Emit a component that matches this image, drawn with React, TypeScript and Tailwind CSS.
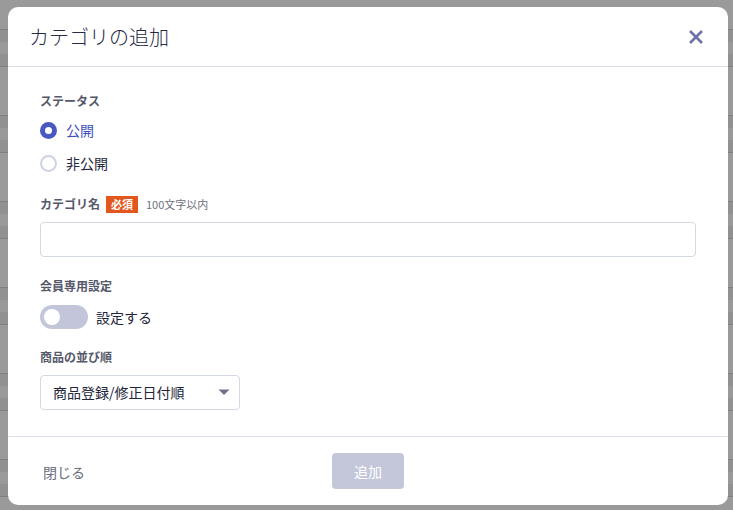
import React, { useState } from 'react';

const font = { fontFamily: '"Noto Sans CJK JP", "Noto Sans", sans-serif' };

// dimmed page behind the modal: table rows with stripes
const Backdrop: React.FC = () => {
  const rows = Array.from({ length: 7 });
  return (
    <div className="absolute inset-0 bg-[#9a9a9a] overflow-hidden">
      <div className="h-[29px]" />
      {rows.map((_, i) => (
        <div key={i} className="h-[86px] flex flex-col">
          <div className="h-px bg-[#818181]" />
          <div className="h-[12px] bg-[#919191]" />
          <div className="h-[12px]" />
          <div className="h-[12px] bg-[#919191]" />
          <div className="h-px bg-[#818181]" />
        </div>
      ))}
    </div>
  );
};

const FieldLabel: React.FC<{ children: React.ReactNode }> = ({ children }) => (
  <div className="h-5 flex items-center text-[12px] font-bold text-[#55586a]">{children}</div>
);

const Radio: React.FC<{ checked: boolean; label: string; onClick: () => void }> = ({ checked, label, onClick }) => (
  <button onClick={onClick} className="h-[33px] flex items-center gap-[9px] text-left">
    {checked ? (
      <span className="w-[17px] h-[17px] rounded-full bg-[#4a58c4] flex items-center justify-center">
        <span className="w-[7px] h-[7px] rounded-full bg-white" />
      </span>
    ) : (
      <span className="w-[17px] h-[17px] rounded-full border-2 border-[#cdd3e3] bg-white" />
    )}
    <span className={`text-[14px] ${checked ? 'text-[#3f4fbf]' : 'text-[#23253a]'}`}>{label}</span>
  </button>
);

export default function App() {
  const [status, setStatus] = useState<'public' | 'private'>('public');
  const [memberOnly, setMemberOnly] = useState(false);
  const [name, setName] = useState('');

  return (
    <div className="relative w-[733px] h-[510px] overflow-hidden" style={font}>
      <Backdrop />
      <div className="absolute left-[8px] top-[7px] w-[720px] h-[498px] bg-white rounded-[10px] flex flex-col">
        <div className="h-[60px] shrink-0 flex items-center justify-between pl-[21px] pr-[24px] border-b border-[#d9dce9]">
          <h1 className="text-[20px] font-light text-[#262a45]">カテゴリの追加</h1>
          <button aria-label="閉じる" className="text-[#6d73a6]">
            <svg width="16" height="16" viewBox="0 0 16 16">
              <path d="M2 2 L14 14 M14 2 L2 14" stroke="currentColor" strokeWidth="2.6" strokeLinecap="butt" />
            </svg>
          </button>
        </div>

        <div className="flex-1 px-[32px] pt-[24px] flex flex-col">
          <FieldLabel>ステータス</FieldLabel>
          <div className="mt-[3px] flex flex-col">
            <Radio checked={status === 'public'} label="公開" onClick={() => setStatus('public')} />
            <Radio checked={status === 'private'} label="非公開" onClick={() => setStatus('private')} />
          </div>

          <div className="mt-[14px] h-5 flex items-center">
            <span className="text-[12px] font-bold text-[#55586a]">カテゴリ名</span>
            <span className="ml-[6px] h-[17px] px-[5px] bg-[#e2571d] text-white text-[11px] font-bold flex items-center">必須</span>
            <span className="ml-[8px] text-[11px] text-[#6f7180]">100文字以内</span>
          </div>
          <input
            value={name}
            onChange={(e) => setName(e.target.value)}
            className="mt-[8px] h-[35px] w-full border border-[#d3d8e6] rounded-[4px] px-3 text-[14px] outline-none"
          />

          <div className="mt-[19px]">
            <FieldLabel>会員専用設定</FieldLabel>
          </div>
          <button onClick={() => setMemberOnly(!memberOnly)} className="mt-[9px] h-[24px] flex items-center gap-[8px] self-start">
            <span className={`w-[48px] h-[24px] rounded-full flex items-center px-[4px] ${memberOnly ? 'bg-[#4a58c4] justify-end' : 'bg-[#c3c6db] justify-start'}`}>
              <span className="w-[16px] h-[16px] rounded-full bg-white" />
            </span>
            <span className="text-[14px] text-[#23253a]">設定する</span>
          </button>

          <div className="mt-[18px]">
            <FieldLabel>商品の並び順</FieldLabel>
          </div>
          <button className="mt-[8px] w-[200px] h-[35px] border border-[#d3d8e6] rounded-[4px] flex items-center justify-between pl-[12px] pr-[9px] self-start">
            <span className="text-[14px] text-[#23253a]">商品登録/修正日付順</span>
            <svg width="12" height="7" viewBox="0 0 12 7">
              <path d="M0.5 0.5 L11.5 0.5 L6 6 Z" fill="#6e7189" />
            </svg>
          </button>
        </div>

        <div className="h-[69px] shrink-0 border-t border-[#dde0ea] flex items-center px-[35px]">
          <div className="flex-1">
            <button className="text-[14px] text-[#6a6c7d]">閉じる</button>
          </div>
          <button disabled className="w-[72px] h-[36px] rounded-[4px] bg-[#c3c7d9] text-white text-[14px]">追加</button>
          <div className="flex-1" />
        </div>
      </div>
    </div>
  );
}
